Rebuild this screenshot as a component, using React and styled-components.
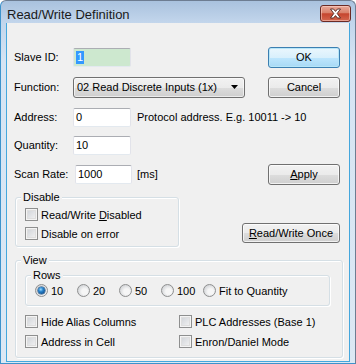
import React from 'react';
import styled, { createGlobalStyle, css } from 'styled-components';

const Global = createGlobalStyle`
  html, body { margin: 0; padding: 0; background: #ffffff; }
  body { width: 356px; height: 364px; overflow: hidden; }
`;

const Window = styled.div`
  width: 356px;
  height: 364px;
  box-sizing: border-box;
  display: flex;
  flex-direction: column;
  border: 1px solid #6d7d92;
  border-left-color: #3d93cc;
  border-bottom-color: #3d93cc;
  border-radius: 6px 6px 0 0;
  background: linear-gradient(#a9c2de, #c3d6ec 22px, #d6e4f3 60px, #dce8f4);
  font-family: "Liberation Sans", Arial, sans-serif;
  font-size: 11px;
  color: #000;
  overflow: hidden;
`;

const TitleBar = styled.div`
  height: 22px;
  flex: none;
  display: flex;
  align-items: flex-start;
  padding: 0 4px 0 6px;
`;

const Title = styled.div`
  flex: 1;
  font-size: 13px;
  line-height: 15px;
  padding-top: 6px;
  color: #1a1a1a;
`;

const CloseButton = styled.div`
  width: 31px;
  height: 17px;
  margin-top: 4px;
  box-sizing: border-box;
  border: 1px solid #6b2b25;
  border-radius: 3px;
  background: linear-gradient(#e9a999, #d9826c 45%, #c5452e 52%, #d4674f);
  box-shadow: inset 0 0 0 1px rgba(255, 220, 210, 0.5);
  display: flex;
  align-items: center;
  justify-content: center;
`;

const Client = styled.div`
  flex: 1;
  margin: 0 5px 1px 5px;
  border: 1px solid #45a7dd;
  border-top: none;
  background: #f0f0f0;
  padding: 12px 9px 0 7px;
  display: flex;
  flex-direction: column;
`;

const FieldRow = styled.div`
  display: flex;
  align-items: center;
  height: 20px;
  margin-top: ${p => p.$gap || 0}px;
`;

const Label = styled.span`
  width: 59px;
  flex: none;
  white-space: nowrap;
`;

const TextBox = styled.div`
  width: ${p => p.$w || 58}px;
  height: 19px;
  margin-left: ${p => p.$ml || 0}px;
  box-sizing: border-box;
  border: 1px solid;
  border-color: #abadb3 #e2e3ea #e3e9ef #e2e3ea;
  border-radius: 2px;
  background: ${p => (p.$tint ? '#cde8cf' : '#ffffff')};
  display: flex;
  align-items: center;
  padding-left: 2px;
  line-height: 13px;
`;

const Selected = styled.span`
  background: #3399ff;
  color: #fff;
  padding: 0 1px;
`;

const Hint = styled.span`
  margin-left: ${p => p.$ml || 6}px;
  white-space: nowrap;
`;

const Select = styled.div`
  width: 172px;
  height: 21px;
  box-sizing: border-box;
  border: 1px solid #707070;
  border-radius: 3px;
  background: linear-gradient(#f2f2f2, #ebebeb 50%, #dddddd 51%, #cfcfcf);
  box-shadow: inset 0 0 0 1px rgba(255, 255, 255, 0.6);
  display: flex;
  align-items: center;
  padding: 0 6px 0 3px;
  white-space: nowrap;
`;

const SelectText = styled.span`
  flex: 1;
`;

const buttonBase = css`
  box-sizing: border-box;
  border: 1px solid #707070;
  border-radius: 3px;
  background: linear-gradient(#f2f2f2, #ebebeb 50%, #dddddd 51%, #cfcfcf);
  box-shadow: inset 0 0 0 1px rgba(255, 255, 255, 0.7);
  display: flex;
  align-items: center;
  justify-content: center;
  white-space: nowrap;
  flex: none;
`;

const Button = styled.div`
  ${buttonBase};
  width: ${p => p.$w || 72}px;
  height: ${p => p.$h || 21}px;
  margin-left: auto;
  margin-bottom: ${p => p.$mb || 0}px;
  ${p =>
    p.$default &&
    css`
      border-color: #3c7fb1;
      background: linear-gradient(#eaf6fd, #d9f0fc 50%, #bee6fd 51%, #a7d9f5);
      box-shadow: inset 0 0 0 1px #b7e6f8;
    `}
`;

const MiddleSection = styled.div`
  display: flex;
  align-items: flex-end;
  margin-top: 13px;
`;

const GroupBox = styled.div`
  position: relative;
  box-sizing: border-box;
  width: ${p => p.$w}px;
  height: ${p => p.$h}px;
  margin-left: ${p => p.$ml || 1}px;
  margin-top: ${p => p.$mt || 0}px;
  border: 1px solid #d5dfe5;
  border-radius: 3px;
  box-shadow: 1px 1px 0 #ffffff, inset 1px 1px 0 #ffffff;
  padding: ${p => p.$pad};
  flex: none;
`;

const Legend = styled.span`
  position: absolute;
  top: -8px;
  left: 5px;
  padding: 0 2px;
  background: #f0f0f0;
  line-height: 14px;
`;

const CheckList = styled.div`
  display: flex;
  flex-direction: column;
  gap: ${p => p.$gap || 6}px;
`;

const CheckGrid = styled.div`
  display: grid;
  grid-template-columns: 154px 1fr;
  row-gap: 7px;
  margin: 9px 0 0 9px;
`;

const Option = styled.div`
  display: flex;
  align-items: center;
  height: 13px;
  gap: 3px;
  white-space: nowrap;
  width: ${p => (p.$w ? `${p.$w}px` : 'auto')};
  flex: none;
`;

const CheckBox = styled.span`
  width: 13px;
  height: 13px;
  box-sizing: border-box;
  flex: none;
  border: 1px solid #8e8f8f;
  background: linear-gradient(135deg, #cbcfd5, #f6f6f6);
  box-shadow: inset 0 0 0 1px #f4f4f4, inset 0 0 0 2px #dedede;
`;

const Radio = styled.span`
  width: 13px;
  height: 13px;
  box-sizing: border-box;
  flex: none;
  border-radius: 50%;
  border: 1px solid #8e8f8f;
  background: radial-gradient(circle at 60% 60%, #f6f6f6 30%, #d3d5d8 75%);
  display: flex;
  align-items: center;
  justify-content: center;
`;

const RadioDot = styled.span`
  width: 7px;
  height: 7px;
  border-radius: 50%;
  background: radial-gradient(circle at 40% 35%, #9fdcff 0, #2a84cc 35%, #0d4c8c 80%);
  box-shadow: 0 0 0 0.5px #0c3e70;
`;

const RadioRow = styled.div`
  display: flex;
  align-items: center;
`;

const ViewBody = styled.div`
  display: flex;
  flex-direction: column;
`;

function CloseGlyph() {
  return (
    <svg width="13" height="11" viewBox="0 0 13 11">
      <path
        d="M1.5 1 H4.5 L6.5 3.4 L8.5 1 H11.5 L8.2 5.5 L11.5 10 H8.5 L6.5 7.6 L4.5 10 H1.5 L4.8 5.5 Z"
        fill="#ffffff"
        stroke="#4d2520"
        strokeWidth="0.9"
        strokeLinejoin="round"
      />
    </svg>
  );
}

function Arrow() {
  return (
    <svg width="7" height="4" viewBox="0 0 7 4">
      <path d="M0 0 H7 L3.5 4 Z" fill="#000" />
    </svg>
  );
}

const rowOptions = ['10', '20', '50', '100', 'Fit to Quantity'];

export default function App() {
  return (
    <>
      <Global />
      <Window>
        <TitleBar>
          <Title>Read/Write Definition</Title>
          <CloseButton>
            <CloseGlyph />
          </CloseButton>
        </TitleBar>
        <Client>
          <FieldRow $gap={12}>
            <Label>Slave ID:</Label>
            <TextBox $tint>
              <Selected>1</Selected>
            </TextBox>
            <Button $default>OK</Button>
          </FieldRow>
          <FieldRow $gap={10}>
            <Label>Function:</Label>
            <Select>
              <SelectText>02 Read Discrete Inputs (1x)</SelectText>
              <Arrow />
            </Select>
            <Button>Cancel</Button>
          </FieldRow>
          <FieldRow $gap={10}>
            <Label>Address:</Label>
            <TextBox>0</TextBox>
            <Hint>Protocol address. E.g. 10011 -&gt; 10</Hint>
          </FieldRow>
          <FieldRow $gap={8}>
            <Label>Quantity:</Label>
            <TextBox>10</TextBox>
          </FieldRow>
          <FieldRow $gap={9}>
            <Label>Scan Rate:</Label>
            <TextBox $w={57} $ml={2}>1000</TextBox>
            <Hint $ml={5}>[ms]</Hint>
            <Button>
              <span>
                <u>A</u>pply
              </span>
            </Button>
          </FieldRow>
          <MiddleSection>
            <GroupBox $w={164} $h={50} $pad="10px 0 0 9px">
              <Legend>Disable</Legend>
              <CheckList $gap={6}>
                <Option>
                  <CheckBox />
                  <span>
                    Read/Write <u>D</u>isabled
                  </span>
                </Option>
                <Option>
                  <CheckBox />
                  <span>Disable on error</span>
                </Option>
              </CheckList>
            </GroupBox>
            <Button $w={98} $h={20} $mb={4}>
              <span>
                <u>R</u>ead/Write Once
              </span>
            </Button>
          </MiddleSection>
          <GroupBox $w={328} $h={98} $mt={13} $pad="14px 0 0 0">
            <Legend>View</Legend>
            <ViewBody>
              <GroupBox $w={305} $h={31} $ml={9} $pad="8px 0 0 9px">
                <Legend>Rows</Legend>
                <RadioRow>
                  {rowOptions.map((o, i) => (
                    <Option key={o} $w={i < 4 ? 42 : 0}>
                      <Radio>{i === 0 && <RadioDot />}</Radio>
                      <span>{o}</span>
                    </Option>
                  ))}
                </RadioRow>
              </GroupBox>
              <CheckGrid>
                <Option>
                  <CheckBox />
                  <span>Hide Alias Columns</span>
                </Option>
                <Option>
                  <CheckBox />
                  <span>PLC Addresses (Base 1)</span>
                </Option>
                <Option>
                  <CheckBox />
                  <span>Address in Cell</span>
                </Option>
                <Option>
                  <CheckBox />
                  <span>Enron/Daniel Mode</span>
                </Option>
              </CheckGrid>
            </ViewBody>
          </GroupBox>
        </Client>
      </Window>
    </>
  );
}
